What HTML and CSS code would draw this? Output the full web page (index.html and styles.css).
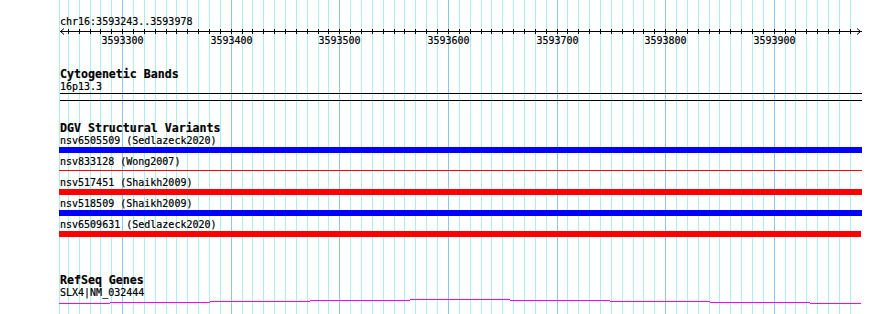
FILE: index.html
```html
<!DOCTYPE html>
<html lang="en">
<head>
<meta charset="utf-8">
<title>Genome browser</title>
<link rel="stylesheet" href="styles.css">
</head>
<body>
<div class="browser">
  <svg class="grid" id="grid" width="890" height="314" xmlns="http://www.w3.org/2000/svg"></svg>
  <div class="tracks">
    <section class="ruler-track">
      <div class="label">chr16:3593243..3593978</div>
      <svg class="ruler" id="ruler" width="803" height="18" xmlns="http://www.w3.org/2000/svg"></svg>
    </section>

    <section class="track cyto">
      <div class="track-title">Cytogenetic Bands</div>
      <div class="label">16p13.3</div>
      <div class="band"></div>
    </section>

    <section class="track dgv">
      <div class="track-title">DGV Structural Variants</div>
      <div class="rows">
        <div class="feature">
          <div class="label">nsv6505509 (Sedlazeck2020)</div>
          <div class="bar blue"></div>
        </div>
        <div class="feature">
          <div class="label">nsv833128 (Wong2007)</div>
          <div class="bar red thin"></div>
        </div>
        <div class="feature">
          <div class="label">nsv517451 (Shaikh2009)</div>
          <div class="bar red"></div>
        </div>
        <div class="feature">
          <div class="label">nsv518509 (Shaikh2009)</div>
          <div class="bar blue"></div>
        </div>
        <div class="feature">
          <div class="label">nsv6509631 (Sedlazeck2020)</div>
          <div class="bar red" style="width: 802px"></div>
        </div>
      </div>
    </section>

    <section class="track refseq">
      <div class="track-title">RefSeq Genes</div>
      <div class="label">SLX4|NM_032444</div>
      <svg class="gene" id="gene" width="803" height="6" xmlns="http://www.w3.org/2000/svg"></svg>
    </section>
  </div>
</div>
<script src="script.js"></script>
</body>
</html>
```

FILE: styles.css
```css
* { box-sizing: border-box; }

body {
  margin: 0;
  background: #ffffff;
  color: #000000;
  font-family: "DejaVu Sans Mono", "Liberation Mono", monospace;
}

.browser {
  position: relative;
  width: 890px;
  height: 314px;
  overflow: hidden;
}

.grid {
  position: absolute;
  left: 0;
  top: 0;
  display: block;
}

.grid .minor { fill: #aeeef0; }
.grid .major { fill: #88c8f0; }

.tracks {
  position: relative;
  margin-left: 59px;
  width: 803px;
}

.label {
  font-size: 10px;
  line-height: 12px;
  height: 12px;
  padding-left: 1px;
  white-space: pre;
  -webkit-text-stroke: 0.2px #000000;
}

.track-title {
  font-weight: bold;
  font-size: 11.6px;
  line-height: 13px;
  height: 13px;
  padding-left: 1px;
  white-space: pre;
  -webkit-text-stroke: 0.2px #000000;
}

.ruler-track { padding-top: 16px; }

.ruler {
  display: block;
  width: 803px;
  height: 18px;
  overflow: visible;
}

.ruler .axis { fill: #000000; }
.ruler .arrow { fill: none; stroke: #000000; stroke-width: 1; }
.ruler text {
  font-family: "DejaVu Sans Mono", "Liberation Mono", monospace;
  font-size: 10px;
  fill: #000000;
  stroke: #000000;
  stroke-width: 0.2px;
}

.cyto { margin-top: 22px; }

.band {
  margin-left: 1px;
  height: 8px;
  border-top: 1px solid #000000;
  border-bottom: 1px solid #000000;
}

.dgv { margin-top: 21px; }

.rows {
  display: flex;
  flex-direction: column;
  gap: 3px;
}

.bar { height: 6px; }
.bar.thin { height: 1px; margin: 2px 0 3px; }
.blue { background: #0000ff; }
.red { background: #ff0000; }

.refseq { margin-top: 37px; }

.gene {
  display: block;
  width: 803px;
  height: 6px;
}

.gene .exonless { fill: #ff00ff; }
```

FILE: script.js
```js
(function () {
  var NS = "http://www.w3.org/2000/svg";
  var OFFSET = 59;

  function el(name, attrs, parent) {
    var e = document.createElementNS(NS, name);
    for (var k in attrs) e.setAttribute(k, attrs[k]);
    parent.appendChild(e);
    return e;
  }

  function col(k) { return Math.floor(68.3 + k * 10.861); }

  // grid
  var grid = document.getElementById("grid");
  el("rect", { x: 59, y: 0, width: 1, height: 314, "class": "minor" }, grid);
  for (var k = 0; k <= 72; k++) {
    var bp = 3593250 + 10 * k;
    el("rect", { x: col(k), y: 0, width: 1, height: 314, "class": bp % 100 === 0 ? "major" : "minor" }, grid);
  }

  // ruler
  var ruler = document.getElementById("ruler");
  el("rect", { x: 1, y: 3, width: 802, height: 1, "class": "axis" }, ruler);
  for (var j = 0; j <= 72; j++) {
    var b = 3593250 + 10 * j;
    var x = col(j) - OFFSET;
    el("rect", { x: x, y: 1, width: 1, height: 5, "class": "axis" }, ruler);
    if (b % 100 === 0) {
      var t = el("text", { x: x + 0.5, y: 15.5, "text-anchor": "middle" }, ruler);
      t.textContent = String(b);
    }
  }
  el("path", { d: "M5,0.5 L1.5,3.5 L5,6.5", "class": "arrow" }, ruler);
  el("path", { d: "M798,0.5 L801.5,3.5 L798,6.5", "class": "arrow" }, ruler);

  // gene line
  var gene = document.getElementById("gene");
  var segs = [[0, 51, 4], [51, 151, 3], [151, 251, 2], [251, 351, 1], [351, 451, 0],
              [451, 551, 1], [551, 651, 2], [651, 751, 3], [751, 802, 4]];
  segs.forEach(function (s) {
    el("rect", { x: s[0], y: s[2], width: s[1] - s[0], height: 1, "class": "exonless" }, gene);
  });
})();
```
